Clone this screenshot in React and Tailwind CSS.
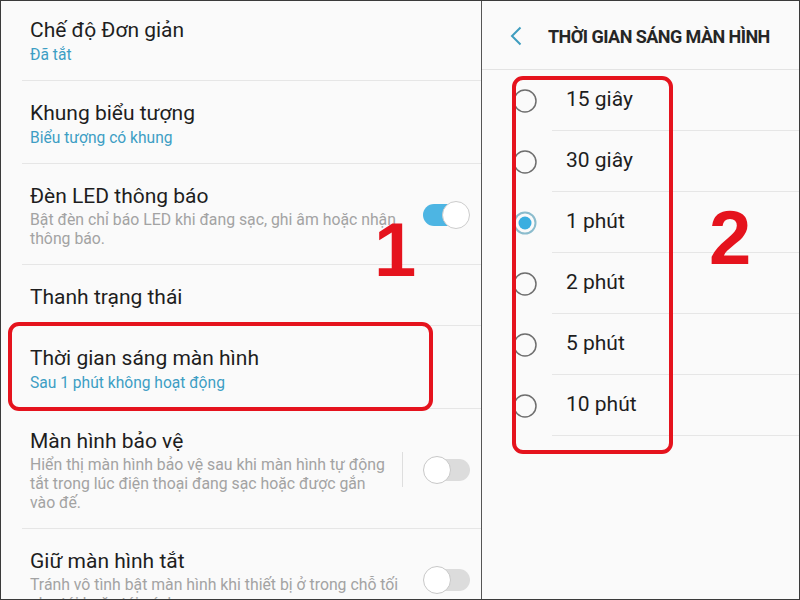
import React from 'react';

const font = { fontFamily: 'Roboto, "Noto Sans", sans-serif' };

const Toggle = ({ on }) => (
  <div className="relative w-[47px] h-[28px] shrink-0">
    <div
      className={
        on
          ? 'absolute left-0 top-[3px] w-[42px] h-[22px] rounded-full bg-[#4db5e3]'
          : 'absolute right-0 top-[3px] w-[42px] h-[22px] rounded-full bg-[#dcdcdc]'
      }
    />
    <div
      className={
        on
          ? 'absolute right-0 top-0 w-[28px] h-[28px] rounded-full bg-white border border-[#cccccc]'
          : 'absolute left-0 top-0 w-[28px] h-[28px] rounded-full bg-white border border-[#c8c8c8]'
      }
    />
  </div>
);

const Item = ({ title, sub, desc, toggle, sep, last, first }) => (
  <div
    className={
      'ml-[21px] pl-[8px] pr-[11px] flex items-center ' +
      (last ? '' : 'border-b border-[#e6e6e6] ') +
      (first ? '-mt-[3px] ' : '') +
      (desc ? 'pt-[18px] pb-[16px]' : 'pt-[18px] pb-[14px]')
    }
  >
    <div className="flex-1 min-w-0">
      <div className="text-[21px] leading-[28px] text-[#1e1e1e] whitespace-nowrap">{title}</div>
      {sub && <div className="text-[15.6px] leading-[22px] text-[#3d9ec4] whitespace-nowrap">{sub}</div>}
      {desc && (
        <div className="text-[15.8px] leading-[19px] text-[#a3a3a3]">
          {desc.map((l) => (
            <div key={l} className="whitespace-nowrap">{l}</div>
          ))}
        </div>
      )}
    </div>
    {sep && <div className="w-px h-[35px] bg-[#dedede] mr-[20px]" />}
    {toggle !== undefined && <Toggle on={toggle} />}
  </div>
);

const Radio = ({ checked }) =>
  checked ? (
    <svg width="24" height="24" viewBox="0 0 24 24" className="shrink-0">
      <circle cx="12" cy="12" r="10.5" fill="none" stroke="#8bbccd" strokeWidth="2" />
      <circle cx="12" cy="12" r="6.5" fill="#3aaee0" />
    </svg>
  ) : (
    <svg width="24" height="24" viewBox="0 0 24 24" className="shrink-0">
      <circle cx="12" cy="12" r="11" fill="none" stroke="#6e6e6e" strokeWidth="1.5" />
    </svg>
  );

const options = ['15 giây', '30 giây', '1 phút', '2 phút', '5 phút', '10 phút'];

export default function App() {
  return (
    <div
      className="relative w-[800px] h-[600px] border border-[#3a3a3a] bg-[#fafafa] flex overflow-hidden"
      style={font}
    >
      {/* settings list */}
      <div className="w-[481px] h-full border-r border-[#555] overflow-hidden">
        <Item first title="Chế độ Đơn giản" sub="Đã tắt" />
        <Item title="Khung biểu tượng" sub="Biểu tượng có khung" />
        <Item
          title="Đèn LED thông báo"
          desc={['Bật đèn chỉ báo LED khi đang sạc, ghi âm hoặc nhận', 'thông báo.']}
          toggle={true}
        />
        <Item title="Thanh trạng thái" />
        <Item title="Thời gian sáng màn hình" sub="Sau 1 phút không hoạt động" />
        <Item
          title="Màn hình bảo vệ"
          desc={[
            'Hiển thị màn hình bảo vệ sau khi màn hình tự động',
            'tắt trong lúc điện thoại đang sạc hoặc được gắn',
            'vào đế.',
          ]}
          sep
          toggle={false}
        />
        <Item
          last
          title="Giữ màn hình tắt"
          desc={['Tránh vô tình bật màn hình khi thiết bị ở trong chỗ tối', 'như túi hoặc túi xách.']}
          toggle={false}
        />
      </div>

      {/* timeout picker */}
      <div className="flex-1 h-full">
        <div className="h-[69px] border-b border-[#e3e3e3] flex items-center pl-[28px] pt-[2px]">
          <svg width="12" height="20" viewBox="0 0 12 20" className="shrink-0">
            <polyline points="10.5,1.5 2,10 10.5,18.5" fill="none" stroke="#3f9dbf" strokeWidth="2" />
          </svg>
          <span className="ml-[26px] text-[18px] font-bold text-[#262626] tracking-[-0.55px] whitespace-nowrap">
            THỜI GIAN SÁNG MÀN HÌNH
          </span>
        </div>
        {options.map((o, i) => (
          <div key={o} className="h-[61px] flex items-center pl-[31px]">
            <Radio checked={i === 2} />
            <div className="ml-[15px] flex-1 h-full border-b border-[#e6e6e6] flex items-center pl-[14px] text-[21px] text-[#1e1e1e]">
              {o}
            </div>
          </div>
        ))}
      </div>

      {/* annotations */}
      <div className="absolute left-[7px] top-[321px] w-[425px] h-[89px] border-[4px] border-[#e5131d] rounded-[11px]" />
      <div className="absolute left-[511px] top-[75px] w-[161px] h-[378px] border-[4px] border-[#e5131d] rounded-[11px]" />
      <div
        className="absolute left-[373px] top-[211px] text-[76px] leading-none font-bold text-[#e5131d]"
        style={{ fontFamily: '"Liberation Sans", Arial, sans-serif' }}
      >
        1
      </div>
      <div
        className="absolute left-[708px] top-[199px] text-[76px] leading-none font-bold text-[#e5131d]"
        style={{ fontFamily: '"Liberation Sans", Arial, sans-serif' }}
      >
        2
      </div>
    </div>
  );
}
